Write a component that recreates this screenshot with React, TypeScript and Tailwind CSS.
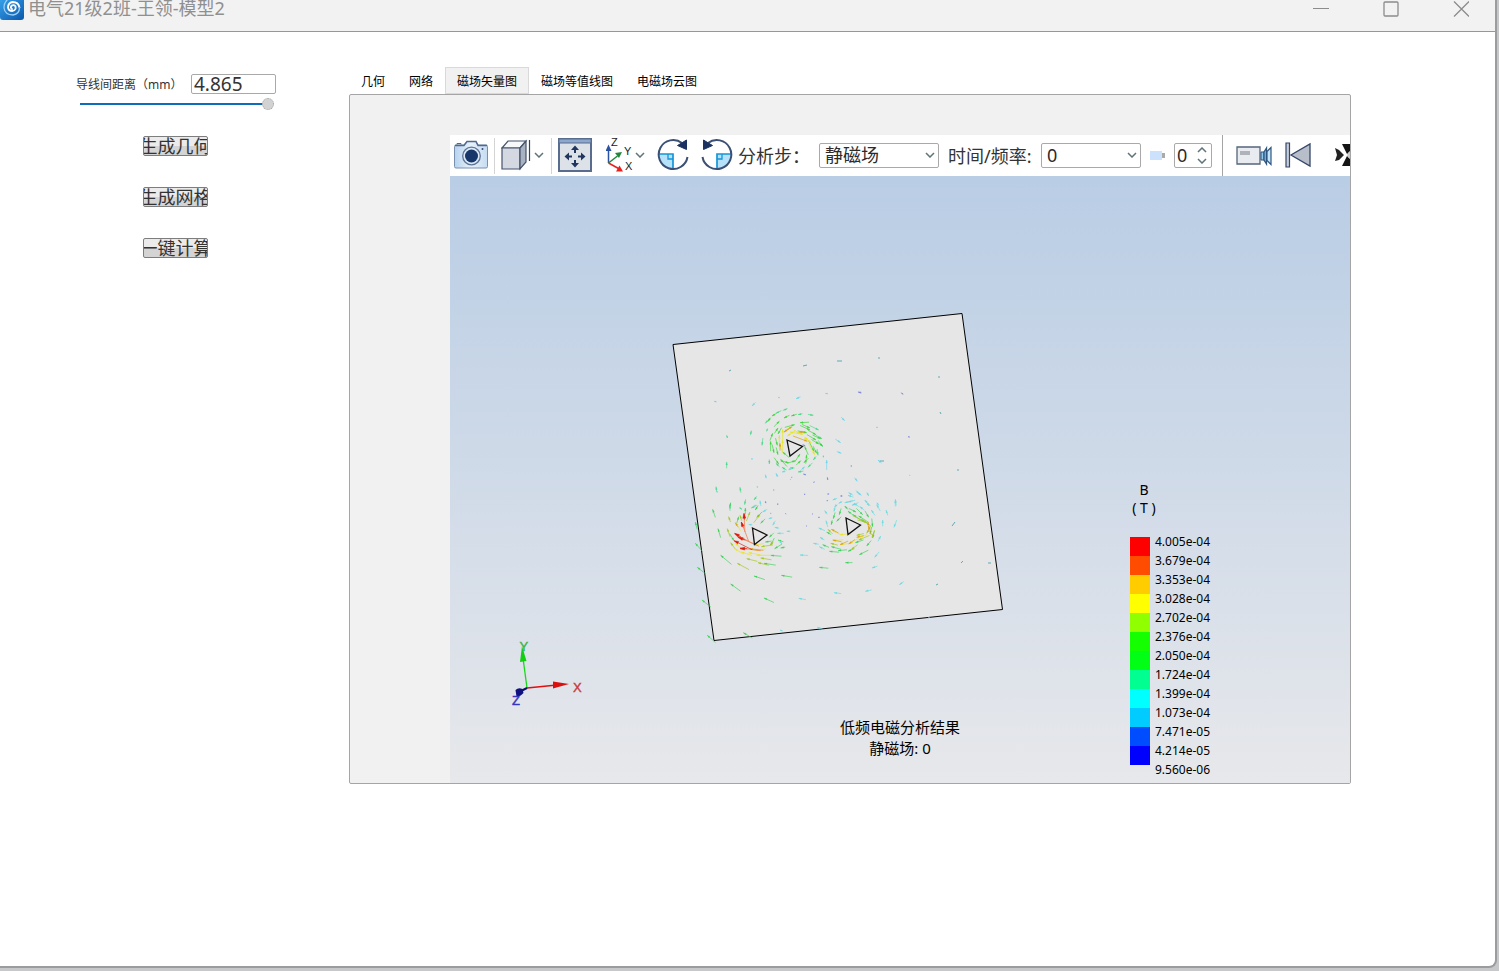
import React, { useState } from "react";

type Arrow = [number, number, number, number];
type Field = { color: string; arrows: Arrow[] };

/* Field vectors around the upper conductor: head x, head y, tail x, tail y. */
const upperField: Field[] = [
  {
    color: "#4cd88a",
    arrows: [
      [196, 130, 206, 118], [228, 100, 240, 94], [262, 86, 252, 90], [294, 104, 304, 102], [186, 196, 188, 180], [200, 154, 202, 148],
      [208, 252, 208, 242], [228, 250, 236, 258], [246, 262, 256, 268], [270, 264, 280, 264], [294, 276, 306, 274], [324, 262, 334, 252],
      [340, 240, 346, 232], [354, 226, 352, 212], [368, 200, 358, 186], [366, 176, 352, 168], [356, 150, 336, 140], [370, 232, 370, 228],
      [90, 376, 90, 388], [134, 374, 136, 362], [120, 322, 122, 334], [48, 320, 50, 332], [162, 360, 168, 352], [154, 384, 166, 378],
      [126, 388, 120, 384], [80, 246, 80, 260], [154, 152, 152, 162], [80, 166, 82, 172], [340, 106, 328, 104],
    ],
  },
  {
    color: "#35d935",
    arrows: [
      [204, 124, 210, 116], [216, 108, 226, 102], [238, 124, 226, 136], [252, 114, 264, 108], [274, 108, 286, 104], [284, 134, 262, 140],
      [300, 128, 320, 127], [234, 144, 226, 156], [218, 160, 212, 176], [212, 184, 212, 206], [222, 218, 218, 200], [232, 196, 228, 180],
      [234, 224, 230, 208], [242, 238, 256, 254], [248, 216, 262, 228], [266, 248, 248, 244], [286, 242, 268, 248], [300, 222, 288, 240],
      [314, 200, 322, 218], [320, 224, 318, 244], [302, 242, 292, 252], [330, 150, 308, 140], [348, 164, 330, 154], [362, 176, 344, 168],
      [348, 180, 328, 168], [356, 192, 340, 182], [368, 198, 354, 188], [342, 214, 330, 190], [350, 220, 342, 204], [320, 158, 300, 154],
      [236, 252, 226, 238], [312, 248, 322, 238], [330, 144, 312, 136], [234, 162, 242, 148],
    ],
  },
  {
    color: "#e6e619",
    arrows: [
      [248, 148, 248, 172], [238, 166, 238, 186], [248, 180, 248, 204], [262, 168, 280, 156], [270, 156, 290, 160], [290, 158, 312, 160],
      [308, 164, 288, 154], [334, 188, 318, 178], [344, 224, 330, 198], [238, 192, 246, 212], [314, 172, 326, 182], [258, 152, 268, 144],
    ],
  },
  {
    color: "#d8a010",
    arrows: [[276, 140, 258, 152], [240, 190, 240, 206], [322, 184, 290, 172], [298, 156, 312, 156], [252, 156, 264, 148]],
  },
  {
    color: "#6fd6ea",
    arrows: [
      [42, 64, 48, 65], [156, 78, 164, 70], [234, 52, 238, 53], [288, 56, 298, 52], [376, 40, 382, 41], [434, 122, 426, 114],
      [422, 188, 410, 180], [528, 142, 532, 142], [534, 240, 542, 247], [472, 304, 466, 296], [380, 240, 380, 262], [314, 260, 306, 268],
      [196, 284, 198, 292], [156, 234, 156, 238], [228, 280, 232, 288], [424, 220, 414, 216], [446, 338, 456, 344], [484, 346, 474, 338],
      [494, 360, 506, 372], [536, 376, 532, 370], [586, 360, 586, 374], [628, 286, 630, 286], [444, 366, 460, 362], [456, 376, 470, 370],
      [480, 380, 490, 388], [404, 380, 410, 376], [246, 276, 254, 274], [276, 266, 268, 268], [172, 318, 172, 322], [270, 300, 272, 298],
    ],
  },
  {
    color: "#7a86d8",
    arrows: [
      [474, 36, 482, 38], [604, 38, 608, 42], [624, 170, 628, 171], [310, 282, 316, 284], [340, 307, 343, 306], [382, 292, 383, 298],
      [220, 330, 222, 330], [196, 364, 197, 368], [232, 373, 234, 373], [312, 343, 314, 343], [422, 348, 424, 348], [380, 362, 383, 362],
      [308, 194, 314, 197], [274, 292, 276, 292], [452, 258, 455, 258],
    ],
  },
];

/* Field vectors around the two lower conductors. */
const lowerField: Field[] = [
  {
    color: "#3fd25a",
    arrows: [
      [68, 58, 74, 76], [122, 38, 120, 48], [84, 116, 90, 136], [92, 196, 116, 216], [16, 160, 32, 178], [22, 232, 40, 246],
      [36, 330, 56, 346], [52, 436, 70, 452], [160, 428, 180, 440], [122, 282, 144, 298], [192, 258, 216, 266], [222, 324, 244, 334],
      [16, 96, 20, 112], [274, 256, 298, 260], [242, 196, 266, 198], [222, 220, 248, 224], [166, 54, 166, 68], [196, 60, 202, 50],
      [200, 82, 212, 70], [212, 100, 222, 90], [226, 156, 240, 154], [242, 166, 250, 150], [254, 176, 270, 166], [264, 150, 276, 154],
      [238, 142, 248, 132], [146, 80, 142, 94], [132, 152, 122, 136], [272, 174, 282, 172], [466, 218, 482, 218], [388, 232, 408, 234],
      [418, 184, 440, 186], [444, 182, 464, 180], [474, 184, 488, 178], [508, 194, 528, 184], [530, 168, 540, 156], [496, 158, 514, 152],
      [540, 132, 544, 116], [548, 110, 546, 92], [536, 82, 528, 68], [518, 74, 504, 60], [498, 66, 482, 58], [474, 64, 488, 74],
      [490, 74, 512, 90], [514, 88, 534, 102], [430, 86, 434, 72], [448, 74, 452, 60], [424, 104, 426, 94], [440, 94, 450, 84],
      [410, 126, 420, 132], [398, 164, 412, 170], [424, 170, 446, 176], [548, 144, 552, 128], [464, 48, 472, 56], [506, 78, 528, 92],
    ],
  },
  {
    color: "#a5c81e",
    arrows: [
      [116, 80, 120, 92], [112, 116, 118, 134], [122, 158, 132, 172], [142, 220, 168, 234], [170, 206, 194, 212], [204, 218, 228, 224],
      [212, 204, 236, 208], [180, 66, 172, 86], [210, 74, 196, 92], [150, 76, 154, 88], [214, 170, 240, 166], [240, 164, 248, 158],
      [414, 118, 424, 128], [500, 136, 516, 132], [506, 150, 530, 140], [530, 130, 540, 112], [532, 98, 510, 92], [528, 96, 498, 82],
      [484, 178, 498, 168], [422, 160, 438, 164], [546, 142, 552, 126],
    ],
  },
  {
    color: "#ece32a",
    arrows: [
      [138, 98, 148, 116], [134, 176, 154, 188], [154, 186, 178, 194], [176, 188, 206, 194], [200, 196, 230, 196], [136, 160, 150, 172],
      [194, 180, 218, 178], [430, 122, 448, 132], [450, 134, 474, 132], [430, 152, 452, 150], [452, 164, 478, 160], [480, 160, 500, 148],
      [194, 166, 214, 162], [510, 142, 526, 136],
    ],
  },
  {
    color: "#d9a31a",
    arrows: [
      [424, 118, 440, 126], [428, 150, 448, 154], [450, 164, 468, 156], [476, 162, 490, 152], [500, 142, 516, 138], [534, 96, 536, 118],
      [536, 108, 542, 128], [180, 176, 210, 180], [136, 98, 142, 108],
    ],
  },
  {
    color: "#f0703a",
    arrows: [[162, 72, 164, 112], [154, 96, 170, 138], [134, 132, 180, 156], [148, 142, 192, 162], [150, 174, 196, 180]],
  },
  { color: "#d91c10", arrows: [[132, 152, 172, 172], [144, 142, 160, 148], [150, 176, 166, 176], [162, 70, 163, 84], [154, 96, 158, 108], [134, 130, 148, 138]] },
  {
    color: "#6fdce0",
    arrows: [
      [78, 2, 82, 6], [210, 32, 212, 44], [190, 50, 196, 46], [218, 66, 228, 60], [236, 86, 244, 84], [254, 112, 264, 114],
      [262, 130, 276, 130], [248, 106, 254, 96], [330, 195, 348, 196], [370, 160, 382, 162], [326, 325, 342, 328], [432, 308, 448, 310],
      [526, 304, 540, 301], [546, 234, 558, 230], [554, 202, 564, 190], [616, 28, 618, 42], [612, 112, 618, 96], [628, 284, 638, 277],
      [270, 420, 276, 422], [382, 412, 394, 416], [404, 62, 410, 70], [408, 92, 412, 106], [432, 64, 436, 48], [446, 40, 454, 36],
      [464, 38, 482, 34], [492, 40, 504, 48], [508, 12, 500, 4], [538, 48, 530, 38], [544, 60, 552, 72], [578, 90, 578, 104],
      [572, 138, 566, 150], [560, 44, 568, 58], [588, 60, 592, 72], [386, 114, 400, 120], [390, 142, 400, 148], [388, 170, 400, 176],
      [474, 16, 486, 20], [428, 30, 438, 26], [176, 104, 184, 104], [290, 124, 298, 124], [276, 162, 270, 154], [536, 18, 532, 10],
    ],
  },
  {
    color: "#8089dd",
    arrows: [
      [226, 37, 228, 37], [262, 42, 264, 42], [241, 70, 243, 70], [286, 70, 288, 72], [343, 13, 345, 13], [384, 82, 388, 82],
      [348, 108, 350, 108], [366, 72, 368, 72], [412, 12, 416, 12], [452, 18, 456, 18],
    ],
  },
];

/* Weak vectors far from the conductors, in viewport coordinates. */
const farField: Arrow[] = [
  [729, 371, 731, 370], [803, 366, 807, 365], [837, 361, 842, 361], [878, 358, 880, 358], [938, 377, 940, 377], [957, 470, 959, 470],
  [952, 526, 955, 522], [961, 563, 963, 561], [936, 585, 938, 584], [988, 563, 991, 563], [928, 618, 930, 617], [880, 461, 884, 461],
  [940, 412, 941, 414],
];

function headPath([x, y, tx, ty]: Arrow, size: number) {
  const dx = tx - x;
  const dy = ty - y;
  const len = Math.hypot(dx, dy) || 1;
  const ux = dx / len;
  const uy = dy / len;
  const l = Math.min(size, len);
  const w = l * 0.3;
  return `M${x} ${y}L${x + ux * l - uy * w} ${y + uy * l + ux * w}L${x + ux * l + uy * w} ${y + uy * l - ux * w}Z`;
}

function shaftPath([x, y, tx, ty]: Arrow) {
  return `M${x} ${y}L${tx + (tx - x) * 0.35} ${ty + (ty - y) * 0.35}`;
}

/* Strong fields get full-size heads; weak ones are drawn almost as bare lines. */
function Vectors({ fields }: { fields: Field[] }) {
  return (
    <>
      {fields.map((f) => {
        const strong = f.color === "#d91c10" || f.color === "#f0703a";
        return (
          <g key={f.color} stroke={f.color} fill={f.color}>
            <path d={f.arrows.map(shaftPath).join("")} strokeWidth="2.5" opacity="0.8" />
            <path d={f.arrows.map((a) => headPath(a, strong ? 14 : 9)).join("")} strokeWidth={strong ? 1 : 0.4} />
          </g>
        );
      })}
    </>
  );
}

const legend = [
  ["bg-[#ff0000]", "4.005e-04"],
  ["bg-[#ff4c00]", "3.679e-04"],
  ["bg-[#ffcc00]", "3.353e-04"],
  ["bg-[#ffff00]", "3.028e-04"],
  ["bg-[#90ff00]", "2.702e-04"],
  ["bg-[#14ff00]", "2.376e-04"],
  ["bg-[#00ff14]", "2.050e-04"],
  ["bg-[#00ff90]", "1.724e-04"],
  ["bg-[#00ffff]", "1.399e-04"],
  ["bg-[#00ccff]", "1.073e-04"],
  ["bg-[#004cff]", "7.471e-05"],
  ["bg-[#0000ff]", "4.214e-05"],
  ["", "9.560e-06"],
];

const tabs = ["几何", "网络", "磁场矢量图", "磁场等值线图", "电磁场云图"];

function Chevron({ up = false, className = "" }: { up?: boolean; className?: string }) {
  return (
    <svg viewBox="0 0 10 6" className={`h-1.5 w-2.5 ${className}`} fill="none" stroke="#5f7378" strokeWidth="1.5">
      <path d={up ? "M1 5l4-4 4 4" : "M1 1l4 4 4-4"} />
    </svg>
  );
}

function ToolButton({ label, className = "", children }: { label: string; className?: string; children: React.ReactNode }) {
  return (
    <button type="button" aria-label={label} className={`flex shrink-0 items-center pb-0.5 ${className}`}>
      {children}
    </button>
  );
}

function RotateIcon({ flip = false }: { flip?: boolean }) {
  return (
    <svg viewBox="0 0 34 34" className="size-[34px]" fill="none">
      <g transform={flip ? "matrix(-1 0 0 1 34 0)" : undefined}>
        <path d="M2 16h15v15C8 31 2.500 25 2 16z" fill="#b5e2fa" />
        <path d="M2 16h15v15" stroke="#1595d8" strokeWidth="1.700" />
        <path d="M12 16v5h5" stroke="#1595d8" strokeWidth="1.300" />
        <path d="M26 5A14.500 14.500 0 1 0 31.500 19" stroke="#3b5074" strokeWidth="2" />
        <path d="M30.500 2v9.500l-9-4z" fill="#1b3260" stroke="#1b3260" />
      </g>
    </svg>
  );
}

function Combo({ id, value, className }: { id: string; value: string; className: string }) {
  return (
    <span className={`relative block h-[25px] shrink-0 ${className}`}>
      <select id={id} className="block h-full w-full appearance-none rounded-xs border border-[#a9a9a9] bg-white pl-[5px] pr-5 text-lg leading-[23px] text-[#2b2b2b]">
        <option>{value}</option>
      </select>
      <Chevron className="pointer-events-none absolute right-1 top-[9px]" />
    </span>
  );
}

function Toolbar() {
  return (
    <div className="flex h-[41px] items-center overflow-hidden whitespace-nowrap bg-white pl-1 text-lg text-[#333]">
      <ToolButton label="截图">
        <svg viewBox="0 0 34 30" className="h-[30px] w-[34px]">
          <defs>
            <linearGradient id="cam" x1="0" y1="0" x2="1" y2="0">
              <stop offset="0" stopColor="#b7d3ee" />
              <stop offset=".5" stopColor="#e7f2fb" />
              <stop offset="1" stopColor="#c6dcf2" />
            </linearGradient>
          </defs>
          <path d="M2 5h8l3-3.500h9L24 5h8q1.500 0 1.500 1.500v20q0 1.500-1.500 1.500H2q-1.500 0-1.500-1.500v-20Q.5 5 2 5z" fill="url(#cam)" stroke="#7890b0" />
          <path d="M1 5.500h9l3-4h9l2 4h9" fill="none" stroke="#53698c" strokeWidth="1.500" />
          <path d="M3 4.500v-1h4v1" fill="none" stroke="#53698c" />
          <circle cx="17.500" cy="16" r="8.800" fill="#dce9f6" stroke="#5e7494" strokeWidth="1.300" />
          <circle cx="17.500" cy="16" r="6.500" fill="#173669" />
          <circle cx="28.500" cy="9" r="1" fill="#304d7d" />
        </svg>
      </ToolButton>
      <span className="ml-1.5 h-9 w-px shrink-0 bg-[#d4d4d4]" />
      <ToolButton label="视图" className="ml-1.5">
        <svg viewBox="0 0 30 32" className="h-8 w-[30px]">
          <path d="M1 9L7 2h18l-6 7z" fill="#f6f8fa" stroke="#45536b" strokeWidth="1.200" />
          <path d="M1 9h18v21H1z" fill="#d4d9e1" stroke="#45536b" strokeWidth="1.200" />
          <path d="M19 9l6-7v21l-6 7z" fill="#a9b2c0" stroke="#45536b" strokeWidth="1.200" />
          <path d="M28.500 1v21" fill="none" stroke="#2d4768" strokeWidth="1.200" />
        </svg>
        <Chevron className="mx-[3px]" />
      </ToolButton>
      <span className="ml-1 h-9 w-px shrink-0 bg-[#d4d4d4]" />
      <ToolButton label="适应窗口" className="ml-1.5">
        <svg viewBox="0 0 34 34" className="size-[34px]">
          <path d="M1 1h32v32H1z" fill="#dde1e8" stroke="#596c8e" strokeWidth="2" />
          <path d="M1 1h32v4H1z" fill="#8ea8cd" stroke="#596c8e" />
          <path d="M17 10v5M17 22v5M9 18.500h5M20 18.500h5" stroke="#20365e" strokeWidth="2" />
          <path d="M17 7.500l4 4.500h-8zM17 29.500l4-4.500h-8zM6.500 18.500l4.500-4v8zM27.500 18.500l-4.500-4v8z" fill="#20365e" />
        </svg>
      </ToolButton>
      <ToolButton label="坐标方向" className="ml-3.5">
        <svg viewBox="0 0 28 36" className="h-9 w-7" fontFamily="Liberation Sans" fontSize="11" fill="#222">
          <path d="M2.500 26V11" stroke="#2951a4" strokeWidth="1.500" />
          <path d="M2.500 7.500L5.500 14h-6z" fill="#2951a4" />
          <path d="M2.500 26l9-7" stroke="#22863f" strokeWidth="1.500" />
          <path d="M16 15l-3 6-4-5z" fill="#22863f" />
          <path d="M2.500 26l10 5.500" stroke="#e82020" strokeWidth="1.500" />
          <path d="M17 34.500h-7l3.500-6z" fill="#e82020" />
          <text x="5" y="9">Z</text>
          <text x="18" y="18">Y</text>
          <text x="19" y="33">X</text>
        </svg>
        <Chevron className="ml-px mr-[3px]" />
      </ToolButton>
      <ToolButton label="顺时针旋转" className="ml-2"><RotateIcon /></ToolButton>
      <ToolButton label="逆时针旋转" className="ml-2.5"><RotateIcon flip /></ToolButton>
      <label htmlFor="step" className="ml-1 shrink-0">分析步：</label>
      <Combo id="step" value="静磁场" className="ml-[9px] w-[120px]" />
      <label htmlFor="freq" className="ml-[9px] w-[84px] shrink-0">时间/频率:</label>
      <Combo id="freq" value="0" className="ml-[9px] w-[100px]" />
      <span className="ml-[9px] flex w-[15px] shrink-0 items-center">
        <span className="h-[9px] w-3 bg-[#cce1fc]" />
        <span className="h-[5px] w-[3px] bg-[#aaa]" />
      </span>
      <span className="ml-[9px] flex h-[25px] w-[38px] shrink-0 items-center rounded-xs border border-[#a9a9a9] pl-0.5">
        <input aria-label="帧" defaultValue="0" className="w-5 min-w-0 text-lg leading-[23px] text-[#2b2b2b]" />
        <span className="flex flex-col gap-[5px]">
          <button type="button" aria-label="增加"><Chevron up className="block" /></button>
          <button type="button" aria-label="减少"><Chevron className="block" /></button>
        </span>
      </span>
      <span className="ml-2.5 h-full w-px shrink-0 bg-[#a5a5a5]" />
      <ToolButton label="录制" className="ml-[13px]">
        <svg viewBox="0 0 36 22" className="h-[22px] w-9">
          <path d="M1 3h23v17H1z" fill="#e8ebef" stroke="#55667c" strokeWidth="1.300" />
          <path d="M4 7h10v4H4z" fill="#aeb3ba" />
          <path d="M25 8h3v8h-3z" fill="#90c8ec" stroke="#2f567f" />
          <path d="M28 8l2.500-4v16l-2.500-4z" fill="#78bde8" stroke="#2f567f" strokeWidth="1.300" />
          <path d="M31 7.500l4-4v17l-4-4z" fill="#c4e6fa" stroke="#2f567f" strokeWidth="1.200" />
        </svg>
      </ToolButton>
      <ToolButton label="首帧" className="ml-3">
        <svg viewBox="0 0 28 26" className="h-[26px] w-7">
          <path d="M2 1h3.500v24H2z" fill="#c9ced8" stroke="#35476a" strokeWidth="1.200" />
          <path d="M26 2v22L7 13z" fill="#b8bec9" stroke="#35476a" strokeWidth="1.300" />
        </svg>
      </ToolButton>
      <ToolButton label="播放" className="ml-[23px]">
        <svg viewBox="0 0 22 22" className="size-[22px]">
          <path d="M0 0h22v22H0z" fill="#fff" />
          <path d="M7 0h15v5l-6 1-4 4-3-6z" fill="#151515" />
          <path d="M7 22h15v-5l-6-1-4-4-3 6z" fill="#151515" />
          <path d="M0 4l4 2 5 5-5 5-4 1 2-6z" fill="#222" />
          <path d="M14 8h8v6h-8l-2-3z" fill="#ccc" />
        </svg>
      </ToolButton>
    </div>
  );
}

function ResultView() {
  return (
    <div className="relative bg-linear-to-b from-[#b9cde5] to-[#e7e8eb] text-black">
      <svg viewBox="450 176 900 607" className="block h-auto w-full" role="img" aria-label="磁场矢量图">
        <path d="M673 344.500L962 313.500 1002.500 609.500 714 640.500z" fill="#e6e6e6" stroke="#000" />
        <g transform="translate(700 380) scale(.333333)"><Vectors fields={upperField} /></g>
        <g transform="translate(690 490) scale(.333333)"><Vectors fields={lowerField} /></g>
        <path d={farField.map((a) => `M${a[0]} ${a[1]}L${a[2]} ${a[3]}`).join("")} stroke="#5fa8b8" />
        <g fill="none" stroke="#111" strokeWidth="1.300">
          <path d="M787 440l15.500 6.500-12.500 9.500z" />
          <path d="M752.500 528l14.500 7-12.500 9.500z" />
          <path d="M846 518l14.500 7-12.500 9.500z" />
        </g>
        <path d="M527 688l-4-30" stroke="#18d818" strokeWidth="1.300" />
        <path d="M522 646l4.500 15-6.500 1z" fill="#12cf12" />
        <path d="M527 688l30-3" stroke="#e01010" strokeWidth="1.300" />
        <path d="M569 684l-16-2.500v7z" fill="#d81010" />
        <path d="M527 688l-8 4" stroke="#101060" strokeWidth="2" />
        <path d="M515.500 690q3-3 7-1l1 4q-3 3.500-7 3.500z" fill="#101080" />
        <g fontFamily="Liberation Sans" fontSize="13" strokeWidth="0.400">
          <text x="519.500" y="651" fill="#3bb24c" stroke="#3bb24c">Y</text>
          <text x="573" y="692" fill="#c83a3a" stroke="#c83a3a">X</text>
          <text x="512" y="705" fill="#3535c0" stroke="#3535c0">Z</text>
        </g>
      </svg>
      <div className="absolute inset-x-0 bottom-6 text-center text-[15px] leading-[21px]">
        <p>低频电磁分析结果</p>
        <p>静磁场: 0</p>
      </div>
      <div className="absolute bottom-1 right-[137px] w-[83px] text-xs leading-[19px]">
        <p className="mb-[15px] w-7 whitespace-nowrap text-center text-sm leading-[18px]">
          B<br />( T )
        </p>
        <ul>
          {legend.map(([swatch, value]) => (
            <li key={value} className="flex h-[19px] gap-[5px]">
              <span className={`mt-[5px] h-[19px] w-5 shrink-0 ${swatch}`} />
              {value}
            </li>
          ))}
        </ul>
      </div>
    </div>
  );
}

function Controls() {
  const [distance, setDistance] = useState("4.865");
  return (
    <aside className="w-[349px] shrink-0 pt-[42px]">
      <div className="flex items-center pl-[76px]">
        <label htmlFor="distance" className="w-[115px] pt-0.5 text-xs text-[#333]">导线间距离（mm）</label>
        <input
          id="distance"
          value={distance}
          onChange={(e) => setDistance(e.target.value)}
          className="h-5 w-[85px] rounded-xs border border-[#a9a9a9] bg-white px-0.5 text-[19px] leading-[18px] text-[#333]"
        />
      </div>
      <input
        type="range"
        aria-label="导线间距离"
        min="0"
        max="4.865"
        step="0.001"
        value={distance}
        onChange={(e) => setDistance(e.target.value)}
        className="ml-20 mt-1 block h-3 w-[194px] appearance-none bg-transparent [&::-webkit-slider-runnable-track]:h-0.5 [&::-webkit-slider-runnable-track]:bg-[#0f6cbd] [&::-webkit-slider-thumb]:-mt-[5px] [&::-webkit-slider-thumb]:size-3 [&::-webkit-slider-thumb]:appearance-none [&::-webkit-slider-thumb]:rounded-full [&::-webkit-slider-thumb]:border [&::-webkit-slider-thumb]:border-dotted [&::-webkit-slider-thumb]:border-[#a8a8a8] [&::-webkit-slider-thumb]:bg-[#d2d2d2]"
      />
      <div className="mt-[26px] flex flex-col items-center gap-[31px] pl-0.5">
        {["生成几何", "生成网格", "一键计算"].map((text) => (
          <button
            key={text}
            type="button"
            className="flex h-5 w-[65px] items-center justify-center overflow-hidden whitespace-nowrap rounded-xs border border-[#7d7d7d] bg-linear-to-b from-[#ebebeb] from-50% to-[#d4d4d4] to-50% text-lg leading-none text-[#333]"
          >
            {text}
          </button>
        ))}
      </div>
    </aside>
  );
}

export default function App() {
  const [active, setActive] = useState("磁场矢量图");
  return (
    <div className="flex min-h-screen bg-[#c6c8ca] pb-[3px] pr-0.5 font-['Noto_Sans','Noto_Sans_CJK_SC',sans-serif]">
      <div className="flex min-w-0 flex-1 flex-col rounded-br-lg border-b-2 border-r-2 border-[#9b9c9e] bg-white">
        <header className="flex h-8 items-start border-b border-[#979797] bg-[#f2f2f2] text-[#8f8f8f]">
          <svg viewBox="0 0 24 20" className="h-5 w-6 shrink-0">
            <defs>
              <linearGradient id="logo" x1="0" y1="0" x2="1" y2="1">
                <stop offset="0" stopColor="#35a0e8" />
                <stop offset="1" stopColor="#0b56ac" />
              </linearGradient>
            </defs>
            <path d="M0 0h24v17q0 3-3 3H3q-3 0-3-3z" fill="url(#logo)" />
            <path d="M12 9q-2-1-.5-3.200Q14 4 15.500 6.500 16.500 10 12.500 11 8.500 11 8 7.500 8 3 12.500 2 18.500 2 19.500 7.500" fill="none" stroke="#fff" strokeWidth="1.800" strokeLinecap="round" />
            <path d="M19.500 7.500Q19.500 14 13 15 5 15 4 8 4 3 7 0" fill="none" stroke="#9fd0f5" strokeWidth="1.300" strokeLinecap="round" />
          </svg>
          <h1 className="ml-1 flex-1 text-lg leading-[17px]">电气21级2班-王领-模型2</h1>
          <div className="flex gap-[54px] pr-[26px] pt-px">
            <button type="button" aria-label="最小化">
              <svg viewBox="0 0 16 16" className="size-4" stroke="#8c8c8c"><path d="M0 7.500h16" /></svg>
            </button>
            <button type="button" aria-label="最大化">
              <svg viewBox="0 0 16 16" className="size-4" fill="none" stroke="#8c8c8c" strokeWidth="1.300"><rect x="1" y="1" width="14" height="14" rx="1" /></svg>
            </button>
            <button type="button" aria-label="关闭">
              <svg viewBox="0 0 16 16" className="size-4" stroke="#8c8c8c" strokeWidth="1.300"><path d="M1 0.500l15 15M16 0.500l-15 15" /></svg>
            </button>
          </div>
        </header>
        <main className="flex flex-1 items-start">
          <Controls />
          <section className="mr-36 min-w-0 flex-1 pt-[35px]">
            <div role="tablist" className="flex text-xs leading-[23px] text-black">
              {tabs.map((tab) => (
                <button
                  key={tab}
                  type="button"
                  role="tab"
                  aria-selected={tab === active}
                  onClick={() => setActive(tab)}
                  className={`border px-[11px] pt-0.5 ${tab === active ? "border-[#d9d9d9] bg-[#f1f1f1]" : "border-transparent"}`}
                >
                  {tab}
                </button>
              ))}
            </div>
            <div className="rounded-xs border border-[#a5a5a5] bg-[#f1f1f1] pl-[100px] pt-10">
              <Toolbar />
              <ResultView />
            </div>
          </section>
        </main>
      </div>
    </div>
  );
}
